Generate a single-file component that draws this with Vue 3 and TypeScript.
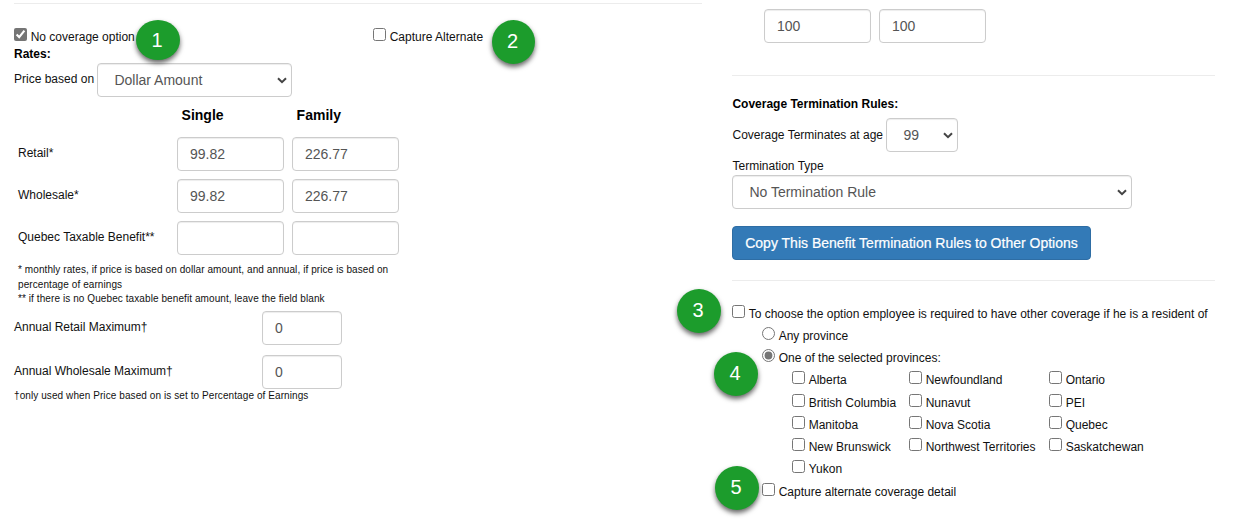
<script setup lang="ts">
import { ref } from 'vue'

interface RateRow { label: string; single: string; family: string }
interface Province { name: string; checked: boolean }

const noCoverage = ref(true)
const captureAlternate = ref(false)
const priceBasis = ref('Dollar Amount')
const rates = ref<RateRow[]>([
  { label: 'Retail*', single: '99.82', family: '226.77' },
  { label: 'Wholesale*', single: '99.82', family: '226.77' },
  { label: 'Quebec Taxable Benefit**', single: '', family: '' },
])
const retailMax = ref('0')
const wholesaleMax = ref('0')
const limits = ref<string[]>(['100', '100'])
const terminationAge = ref('99')
const terminationType = ref('No Termination Rule')
const requireOther = ref(false)
const residency = ref<'any' | 'selected'>('selected')
const captureDetail = ref(false)
const toProvince = (name: string): Province => ({ name, checked: false })
const provinces = ref<Province[]>([
  'Alberta', 'Newfoundland', 'Ontario',
  'British Columbia', 'Nunavut', 'PEI',
  'Manitoba', 'Nova Scotia', 'Quebec',
  'New Brunswick', 'Northwest Territories', 'Saskatchewan',
  'Yukon',
].map(toProvince))
</script>

<template>
  <main class="page">
    <section class="left">
      <hr class="rule" />
      <div class="toggles">
        <label class="check"><input v-model="noCoverage" type="checkbox" /><span>No coverage option</span></label>
        <label class="check"><input v-model="captureAlternate" type="checkbox" /><span>Capture Alternate</span></label>
      </div>
      <strong class="heading">Rates:</strong>
      <div class="price">
        <label for="basis">Price based on</label>
        <span class="select basis">
          <select id="basis" v-model="priceBasis" class="control"><option>Dollar Amount</option></select>
          <svg class="chev" viewBox="0 0 10 7"><path d="M1 1.2 5 5.2 9 1.2" /></svg>
        </span>
      </div>
      <div class="rates head"><span></span><b>Single</b><b>Family</b></div>
      <div v-for="row in rates" :key="row.label" class="rates">
        <span class="rate-label">{{ row.label }}</span>
        <input v-model="row.single" class="control" type="text" />
        <input v-model="row.family" class="control" type="text" />
      </div>
      <div class="notes">
        <p class="first">* monthly rates, if price is based on dollar amount, and annual, if price is based on</p>
        <p>percentage of earnings</p>
        <p>** if there is no Quebec taxable benefit amount, leave the field blank</p>
      </div>
      <div class="maximum"><span>Annual Retail Maximum†</span><input v-model="retailMax" class="control" type="text" /></div>
      <div class="maximum second"><span>Annual Wholesale Maximum†</span><input v-model="wholesaleMax" class="control" type="text" /></div>
      <p class="dagger">†only used when Price based on is set to Percentage of Earnings</p>
    </section>

    <section class="right">
      <div class="limits">
        <input v-for="(_, i) in limits" :key="i" v-model="limits[i]" class="control" type="text" />
      </div>
      <hr class="rule" />
      <strong class="heading rules-title">Coverage Termination Rules:</strong>
      <div class="age">
        <label for="age">Coverage Terminates at age</label>
        <span class="select">
          <select id="age" v-model="terminationAge" class="control"><option>99</option></select>
          <svg class="chev" viewBox="0 0 10 7"><path d="M1 1.2 5 5.2 9 1.2" /></svg>
        </span>
      </div>
      <label class="type-label" for="type">Termination Type</label>
      <span class="select type">
        <select id="type" v-model="terminationType" class="control"><option>No Termination Rule</option></select>
        <svg class="chev" viewBox="0 0 10 7"><path d="M1 1.2 5 5.2 9 1.2" /></svg>
      </span>
      <button class="copy" type="button">Copy This Benefit Termination Rules to Other Options</button>
      <hr class="rule" />
      <label class="check require"><input v-model="requireOther" type="checkbox" /><span>To choose the option employee is required to have other coverage if he is a resident of</span></label>
      <div class="residency">
        <label class="check"><input v-model="residency" type="radio" value="any" /><span>Any province</span></label>
        <label class="check"><input v-model="residency" type="radio" value="selected" /><span>One of the selected provinces:</span></label>
        <div class="provinces">
          <label v-for="p in provinces" :key="p.name" class="check"><input v-model="p.checked" type="checkbox" /><span>{{ p.name }}</span></label>
        </div>
        <label class="check"><input v-model="captureDetail" type="checkbox" /><span>Capture alternate coverage detail</span></label>
      </div>
    </section>

    <span class="badge b1">1</span>
    <span class="badge b2">2</span>
    <span class="badge b3">3</span>
    <span class="badge b4">4</span>
    <span class="badge b5">5</span>
  </main>
</template>

<style>
body { margin: 0; background: #fff; }
</style>

<style scoped>
* { box-sizing: border-box; }
.page {
  position: relative;
  display: flex;
  gap: 30px;
  width: 1245px;
  height: 520px;
  overflow: hidden;
  background: #fff;
  color: #111;
  font: 12px/17px "Liberation Sans", Arial, sans-serif;
  white-space: nowrap;
}
.left { width: 702px; padding: 3px 0 0 14px; }
.right { width: 483px; padding-top: 9px; }
p { margin: 0; }
.rule { height: 1px; margin: 0; border: 0; background: #ececec; }
.heading { display: block; color: #000; }
.check { display: flex; align-items: flex-start; gap: 3.7px; height: 17px; }
.check span { padding-top: 1px; }
.check input { width: 13px; height: 13px; margin: 0; flex: none; accent-color: #757575; }
.control {
  width: 107px;
  height: 34px;
  margin: 0;
  padding: 6px 12px;
  border: 1px solid #ccc;
  border-radius: 4px;
  background: #fff;
  box-shadow: inset 0 1px 1px rgba(0, 0, 0, .075);
  color: #555;
  font: 14px/20px "Liberation Sans", Arial, sans-serif;
  outline: 0;
}
.select { display: block; position: relative; flex: none; }
.select .control { display: block; width: 100%; padding: 6px 16.4px; appearance: none; }
.chev { position: absolute; right: 5px; top: 14px; width: 10px; height: 7px; fill: none; stroke: #444; stroke-width: 2; }

.toggles { display: grid; grid-template-columns: 359px auto; margin: 24px 0 1px; }
.price { display: flex; gap: 3px; }
.price label { width: 80px; padding-top: 8px; }
.basis { width: 195px; }
.rates { display: grid; grid-template-columns: 155px 107px 107px; column-gap: 8px; height: 34px; margin-bottom: 8px; }
.rates .rate-label { padding: 8px 0 0 4px; }
.rates.head { height: 20px; margin: 8px 0 12px; font-size: 14px; line-height: 20px; color: #000; }
.rates.head b { padding-left: 4.6px; }
.notes, .dagger { font-size: 10px; line-height: 14px; letter-spacing: .085px; }
.notes { padding-left: 4px; height: 48px; }
.notes .first { height: 15px; }
.maximum { display: grid; grid-template-columns: 248px 80px; height: 34px; }
.maximum span { padding-top: 8px; }
.maximum .control { width: 80px; }
.maximum.second { margin-top: 10px; }

.limits { display: flex; gap: 8px; padding-left: 32px; margin-bottom: 32px; }
.rules-title { margin-top: 20px; padding-left: .4px; }
.age { display: flex; gap: 3px; margin-top: 5px; }
.age label { width: 151px; padding: 9px 0 0 .5px; }
.age .select { width: 72px; }
.type-label { display: block; margin-top: 6px; padding-left: .5px; }
.type { width: 400px; }
.copy {
  display: block;
  width: 359px;
  height: 34px;
  margin: 17px 0 20px;
  padding: 0;
  border: 1px solid #2e6da4;
  border-radius: 4px;
  background: #337ab7;
  color: #fff;
  font: 14px/20px "Liberation Sans", Arial, sans-serif;
  -webkit-text-stroke: .2px #fff;
}
.require { margin-top: 24px; }
.residency { display: grid; gap: 5px; margin-top: 5px; padding-left: 30px; }
.provinces { display: grid; grid-template-columns: 117px 140px 106px; row-gap: 5px; padding: 0 0 1px 30px; }
.provinces .check:nth-child(-n + 3) { margin-bottom: 1px; }

.badge {
  position: absolute;
  display: flex;
  align-items: center;
  justify-content: center;
  width: 44px;
  height: 44px;
  padding: 0 2px 3px 0;
  border-radius: 50%;
  background: #1c9c2c;
  box-shadow: 0 3px 5px rgba(0, 0, 0, .6);
  color: #fff;
  font: 20px/24px "Liberation Sans", Arial, sans-serif;
}
.b1 { left: 136px; top: 20px; height: 40px; padding-bottom: 0; }
.b2 { left: 492px; top: 20px; width: 43px; }
.b3 { left: 677px; top: 289px; }
.b4 { left: 714px; top: 352px; }
.b5 { left: 715px; top: 466px; }
</style>
